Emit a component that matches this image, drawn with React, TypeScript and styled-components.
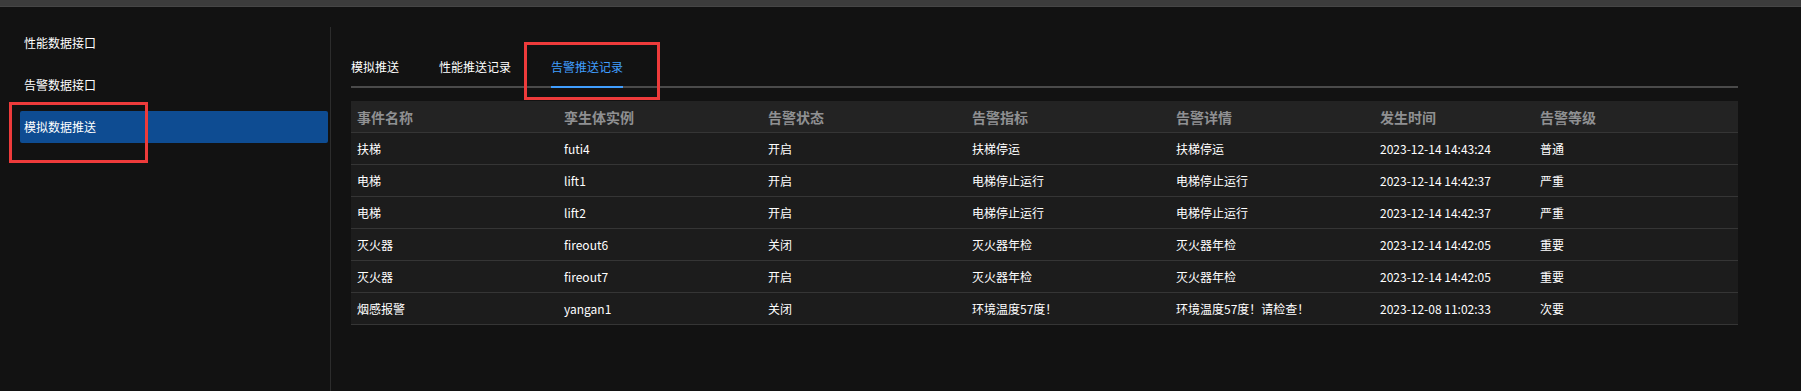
import React, { useState } from 'react';
import styled, { createGlobalStyle } from 'styled-components';

const GlobalStyle = createGlobalStyle`
  html, body {
    margin: 0;
    padding: 0;
    background: #121212;
    font-family: "Noto Sans CJK SC", "Noto Sans", "Liberation Sans", sans-serif;
  }
`;

const Page = styled.div`
  position: relative;
  width: 1801px;
  height: 391px;
  overflow: hidden;
  background: #121212;
`;
const TopBar = styled.div`
  height: 6px;
  background: #3c3c3c;
  border-bottom: 1px solid #464646;
`;
const Body = styled.div`
  display: flex;
  height: 384px;
  padding-top: 20px;
  box-sizing: border-box;
`;
const Sidebar = styled.nav`
  width: 331px;
  box-sizing: border-box;
  padding: 0 2px 0 20px;
  border-right: 1px solid #2c2c2c;
  display: flex;
  flex-direction: column;
  gap: 10px;
`;
const MenuItem = styled.div<{ $active?: boolean }>`
  height: 32px;
  line-height: 32px;
  padding-left: 4px;
  font-size: 12px;
  color: #ffffff;
  border-radius: 2px;
  background: ${(p) => (p.$active ? '#0e4c92' : 'transparent')};
  cursor: pointer;
`;
const Main = styled.main`
  flex: 1;
  padding: 0 63px 0 20px;
`;
const TabBar = styled.div`
  display: flex;
  margin-top: 21px;
  border-bottom: 2px solid #4a4a4a;
`;
const Tab = styled.div<{ $active?: boolean }>`
  position: relative;
  height: 38px;
  line-height: 38px;
  padding: 0 20px;
  font-size: 12px;
  color: ${(p) => (p.$active ? '#409eff' : '#ffffff')};
  cursor: pointer;
  &:first-child {
    padding-left: 0;
  }
  &::after {
    content: '';
    display: ${(p) => (p.$active ? 'block' : 'none')};
    position: absolute;
    left: 20px;
    right: 20px;
    bottom: -2px;
    height: 2px;
    background: #409eff;
  }
`;
const Table = styled.table`
  width: 100%;
  margin-top: 13px;
  border-collapse: collapse;
  table-layout: fixed;
`;
const HeadCell = styled.th`
  height: 31px;
  padding: 0 0 0 6px;
  text-align: left;
  font-size: 14px;
  font-weight: bold;
  color: #8f9092;
  background: #232323;
  border-bottom: 1px solid #353535;
  white-space: nowrap;
`;
const Cell = styled.td`
  height: 31px;
  padding: 0 0 0 6px;
  font-size: 12px;
  color: #ffffff;
  background: #1c1c1c;
  border-bottom: 1px solid #353535;
  white-space: nowrap;
`;
const Highlight = styled.div<{ $x: number; $y: number; $w: number; $h: number }>`
  position: absolute;
  left: ${(p) => p.$x}px;
  top: ${(p) => p.$y}px;
  width: ${(p) => p.$w}px;
  height: ${(p) => p.$h}px;
  box-sizing: border-box;
  border: 3px solid #ee3b3b;
  pointer-events: none;
`;

const menus = ['性能数据接口', '告警数据接口', '模拟数据推送'];
const tabs = ['模拟推送', '性能推送记录', '告警推送记录'];
const columns = [
  { title: '事件名称', width: 207 },
  { title: '孪生体实例', width: 204 },
  { title: '告警状态', width: 204 },
  { title: '告警指标', width: 204 },
  { title: '告警详情', width: 204 },
  { title: '发生时间', width: 160 },
  { title: '告警等级', width: 204 },
];
const rows = [
  ['扶梯', 'futi4', '开启', '扶梯停运', '扶梯停运', '2023-12-14 14:43:24', '普通'],
  ['电梯', 'lift1', '开启', '电梯停止运行', '电梯停止运行', '2023-12-14 14:42:37', '严重'],
  ['电梯', 'lift2', '开启', '电梯停止运行', '电梯停止运行', '2023-12-14 14:42:37', '严重'],
  ['灭火器', 'fireout6', '关闭', '灭火器年检', '灭火器年检', '2023-12-14 14:42:05', '重要'],
  ['灭火器', 'fireout7', '开启', '灭火器年检', '灭火器年检', '2023-12-14 14:42:05', '重要'],
  ['烟感报警', 'yangan1', '关闭', '环境温度57度！', '环境温度57度！请检查！', '2023-12-08 11:02:33', '次要'],
];

const App = () => {
  const [menu, setMenu] = useState(2);
  const [tab, setTab] = useState(2);
  return (
    <Page>
      <GlobalStyle />
      <TopBar />
      <Body>
        <Sidebar>
          {menus.map((m, i) => (
            <MenuItem key={m} $active={menu === i} onClick={() => setMenu(i)}>
              {m}
            </MenuItem>
          ))}
        </Sidebar>
        <Main>
          <TabBar>
            {tabs.map((t, i) => (
              <Tab key={t} $active={tab === i} onClick={() => setTab(i)}>
                {t}
              </Tab>
            ))}
          </TabBar>
          <Table>
            <colgroup>
              {columns.map((c) => (
                <col key={c.title} style={{ width: c.width }} />
              ))}
            </colgroup>
            <thead>
              <tr>
                {columns.map((c) => (
                  <HeadCell key={c.title}>{c.title}</HeadCell>
                ))}
              </tr>
            </thead>
            <tbody>
              {rows.map((r) => (
                <tr key={r[1]}>
                  {r.map((v, i) => (
                    <Cell key={i}>{v}</Cell>
                  ))}
                </tr>
              ))}
            </tbody>
          </Table>
        </Main>
      </Body>
      <Highlight $x={9} $y={102} $w={139} $h={61} />
      <Highlight $x={524} $y={42} $w={136} $h={58} />
    </Page>
  );
};

export default App;
